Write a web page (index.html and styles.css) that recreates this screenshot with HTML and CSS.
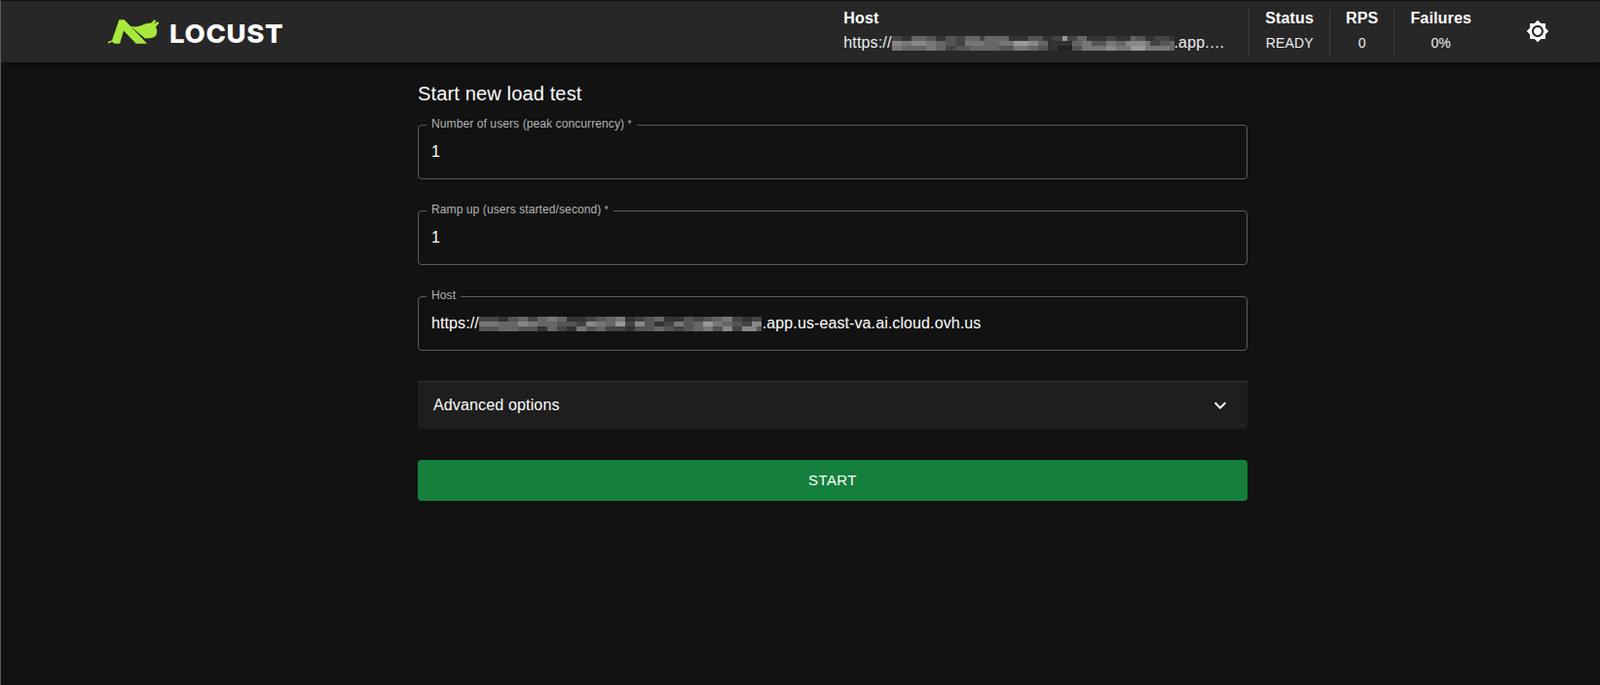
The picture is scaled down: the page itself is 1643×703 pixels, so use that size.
FILE: index.html
```html
<!DOCTYPE html>
<html lang="en">
<head>
  <meta charset="UTF-8" />
  <title>Locust</title>
  <link rel="stylesheet" href="styles.css">
</head>
<body>

  <header>
    <div class="logo">
      <svg class="logo-mark" viewBox="15 15 165 80" width="55" height="27">
        <path fill="#a9e83c" d="M52 18H68L138 92H104L66 52L54 92H36L31 86L18 92V86L30 82Z"/>
        <path fill="#a9e83c" d="M86 38Q106 44 125 34Q138 27 150 29L160 18L166 22L158 32L170 24L175 29L165 40Q172 55 165 68Q158 76 132 76Z"/>
      </svg>
      <span class="logo-text">LOCUST</span>
    </div>
    <div class="stats">
      <div class="stat stat-host">
        <div class="stat-title">Host</div>
        <div class="stat-value host-value">https://<svg class="mosaic" id="mosaicTop" width="290" height="15"></svg>.app.…</div>
      </div>
      <div class="stat">
        <div class="stat-title">Status</div>
        <div class="stat-value">READY</div>
      </div>
      <div class="stat">
        <div class="stat-title">RPS</div>
        <div class="stat-value">0</div>
      </div>
      <div class="stat stat-last">
        <div class="stat-title">Failures</div>
        <div class="stat-value">0%</div>
      </div>
      <button class="theme-btn" type="button" aria-label="Toggle theme">
        <svg viewBox="0 0 24 24" width="24" height="24"><path fill="#fff" d="M20 8.69V4h-4.69L12 .69 8.69 4H4v4.69L.69 12 4 15.31V20h4.69L12 23.31 15.31 20H20v-4.69L23.31 12 20 8.69zM12 18c-3.31 0-6-2.69-6-6s2.69-6 6-6 6 2.69 6 6-2.69 6-6 6zm0-10c-2.21 0-4 1.79-4 4s1.79 4 4 4 4-1.79 4-4-1.79-4-4-4z"/></svg>
      </button>
    </div>
  </header>

  <main>
    <h2>Start new load test</h2>
    <form class="swarm-form">
      <div class="field">
        <label for="userCount">Number of users (peak concurrency) <span class="req">*</span></label>
        <input class="field-value" id="userCount" type="text" value="1">
      </div>
      <div class="field">
        <label for="spawnRate">Ramp up (users started/second) <span class="req">*</span></label>
        <input class="field-value" id="spawnRate" type="text" value="1">
      </div>
      <div class="field">
        <label>Host</label>
        <div class="field-value">https://<svg class="mosaic" id="mosaicForm" width="291" height="15"></svg>.app.us-east-va.ai.cloud.ovh.us</div>
      </div>
      <div class="accordion">
        <span>Advanced options</span>
        <svg viewBox="0 0 24 24" width="24" height="24"><path fill="#fff" d="M16.59 8.59 12 13.17 7.41 8.59 6 10l6 6 6-6z"/></svg>
      </div>
      <button class="start-btn" type="button">START</button>
    </form>
  </main>

  <script src="mosaic.js"></script>

</body>
</html>
```

FILE: styles.css
```css
* {
  margin: 0;
  padding: 0;
  box-sizing: border-box;
}

body {
  font-family: 'Liberation Sans', Arial, sans-serif;
  background-color: #121212;
  color: white;
  height: 703px;
  overflow: hidden;
  border-left: 1px solid #5a5a5a;
  border-top: 1px solid #111;
}

header {
  display: flex;
  justify-content: space-between;
  align-items: center;
  height: 63px;
  padding: 0 44px 0 109px;
  background-color: #272727;
  box-shadow: 0 2px 4px rgba(0, 0, 0, 0.3);
}

.logo {
  display: flex;
  align-items: flex-end;
  gap: 9px;
}

.logo-text {
  font-family: 'Inter', sans-serif;
  font-size: 26px;
  font-weight: 800;
  line-height: 23px;
  letter-spacing: 0.6px;
  transform: scaleX(1.06);
  transform-origin: left;
}

.stats {
  display: flex;
  align-items: center;
}

.stat {
  display: flex;
  flex-direction: column;
  align-items: center;
  gap: 4px;
  height: 48px;
  padding: 0 16px;
  border-right: 1px solid #3d3d3d;
}

.stat-host {
  align-items: flex-start;
  width: 417px;
  padding: 0 25px 0 0;
}

.stat-last {
  border-right: none;
  margin-right: 32px;
}

.stat-title {
  font-size: 16px;
  font-weight: 700;
  line-height: 20px;
  letter-spacing: 0.15px;
}

.stat-value {
  font-size: 14px;
  line-height: 22px;
  letter-spacing: 0.15px;
  color: #eee;
}

.host-value {
  width: 100%;
  font-size: 16px;
  white-space: nowrap;
}

.mosaic {
  vertical-align: -3px;
}

.theme-btn {
  display: flex;
  align-items: center;
  justify-content: center;
  width: 40px;
  height: 40px;
  margin-bottom: 1px;
  background: none;
  border: none;
}

main {
  width: 852px;
  margin-left: 428px;
  padding-top: 16px;
}

h2 {
  font-size: 20px;
  font-weight: 400;
  line-height: 32px;
  letter-spacing: 0.15px;
  margin-bottom: 16px;
}

.swarm-form {
  display: flex;
  flex-direction: column;
  gap: 32px;
}

.field {
  position: relative;
  height: 56px;
  border: 1px solid #5c5c5c;
  border-radius: 4px;
  display: flex;
  align-items: center;
}

.field label {
  position: absolute;
  top: -9px;
  left: 8px;
  padding: 0 5px;
  font-size: 12px;
  line-height: 14px;
  letter-spacing: 0.1px;
  color: #b3b3b3;
  background-color: #121212;
}

.req {
  font-size: 10px;
}

.field-value {
  flex: 1;
  padding: 0 13px;
  font-family: inherit;
  font-size: 16px;
  letter-spacing: 0.1px;
  color: white;
  background: none;
  border: none;
  outline: none;
  white-space: nowrap;
}

.accordion {
  display: flex;
  justify-content: space-between;
  align-items: center;
  height: 49px;
  margin-top: -1px;
  padding: 0 16px;
  font-size: 16px;
  letter-spacing: 0.15px;
  background-color: #1e1e1e;
  border-top: 1px solid #333;
  border-radius: 0 0 4px 4px;
}

.start-btn {
  height: 42px;
  padding-bottom: 2px;
  font-family: inherit;
  font-size: 15px;
  letter-spacing: 0.4px;
  color: white;
  background-color: #15803d;
  border: none;
  border-radius: 4px;
}
```

FILE: mosaic.js
```js
// each digit is one 5px cell, grey level = digit * 17
const mosaicRows = {
  mosaicTop: [
    '4433666553355446664666663333555334494466333344333655334443',
    '8877888776655447777666777999886633333667755577668888744556',
    '7766666776644555666666555777665533222557777788777999777776'
  ],
  mosaicForm: [
    '4444335566446677663333445566773344556633335544556677443344',
    '7777666688776666555544887766994488553344775566997766554488',
    '5555666655553366443377556644443355556655445566775588448885'
  ]
};

for (const id in mosaicRows) {
  const svg = document.getElementById(id);
  let cells = '';
  mosaicRows[id].forEach((row, y) => {
    [...row].forEach((digit, x) => {
      const grey = '#' + digit.repeat(3);
      cells += `<rect x="${x * 5}" y="${y * 5}" width="5" height="5" fill="${grey}"/>`;
    });
  });
  svg.innerHTML = cells;
}
```
